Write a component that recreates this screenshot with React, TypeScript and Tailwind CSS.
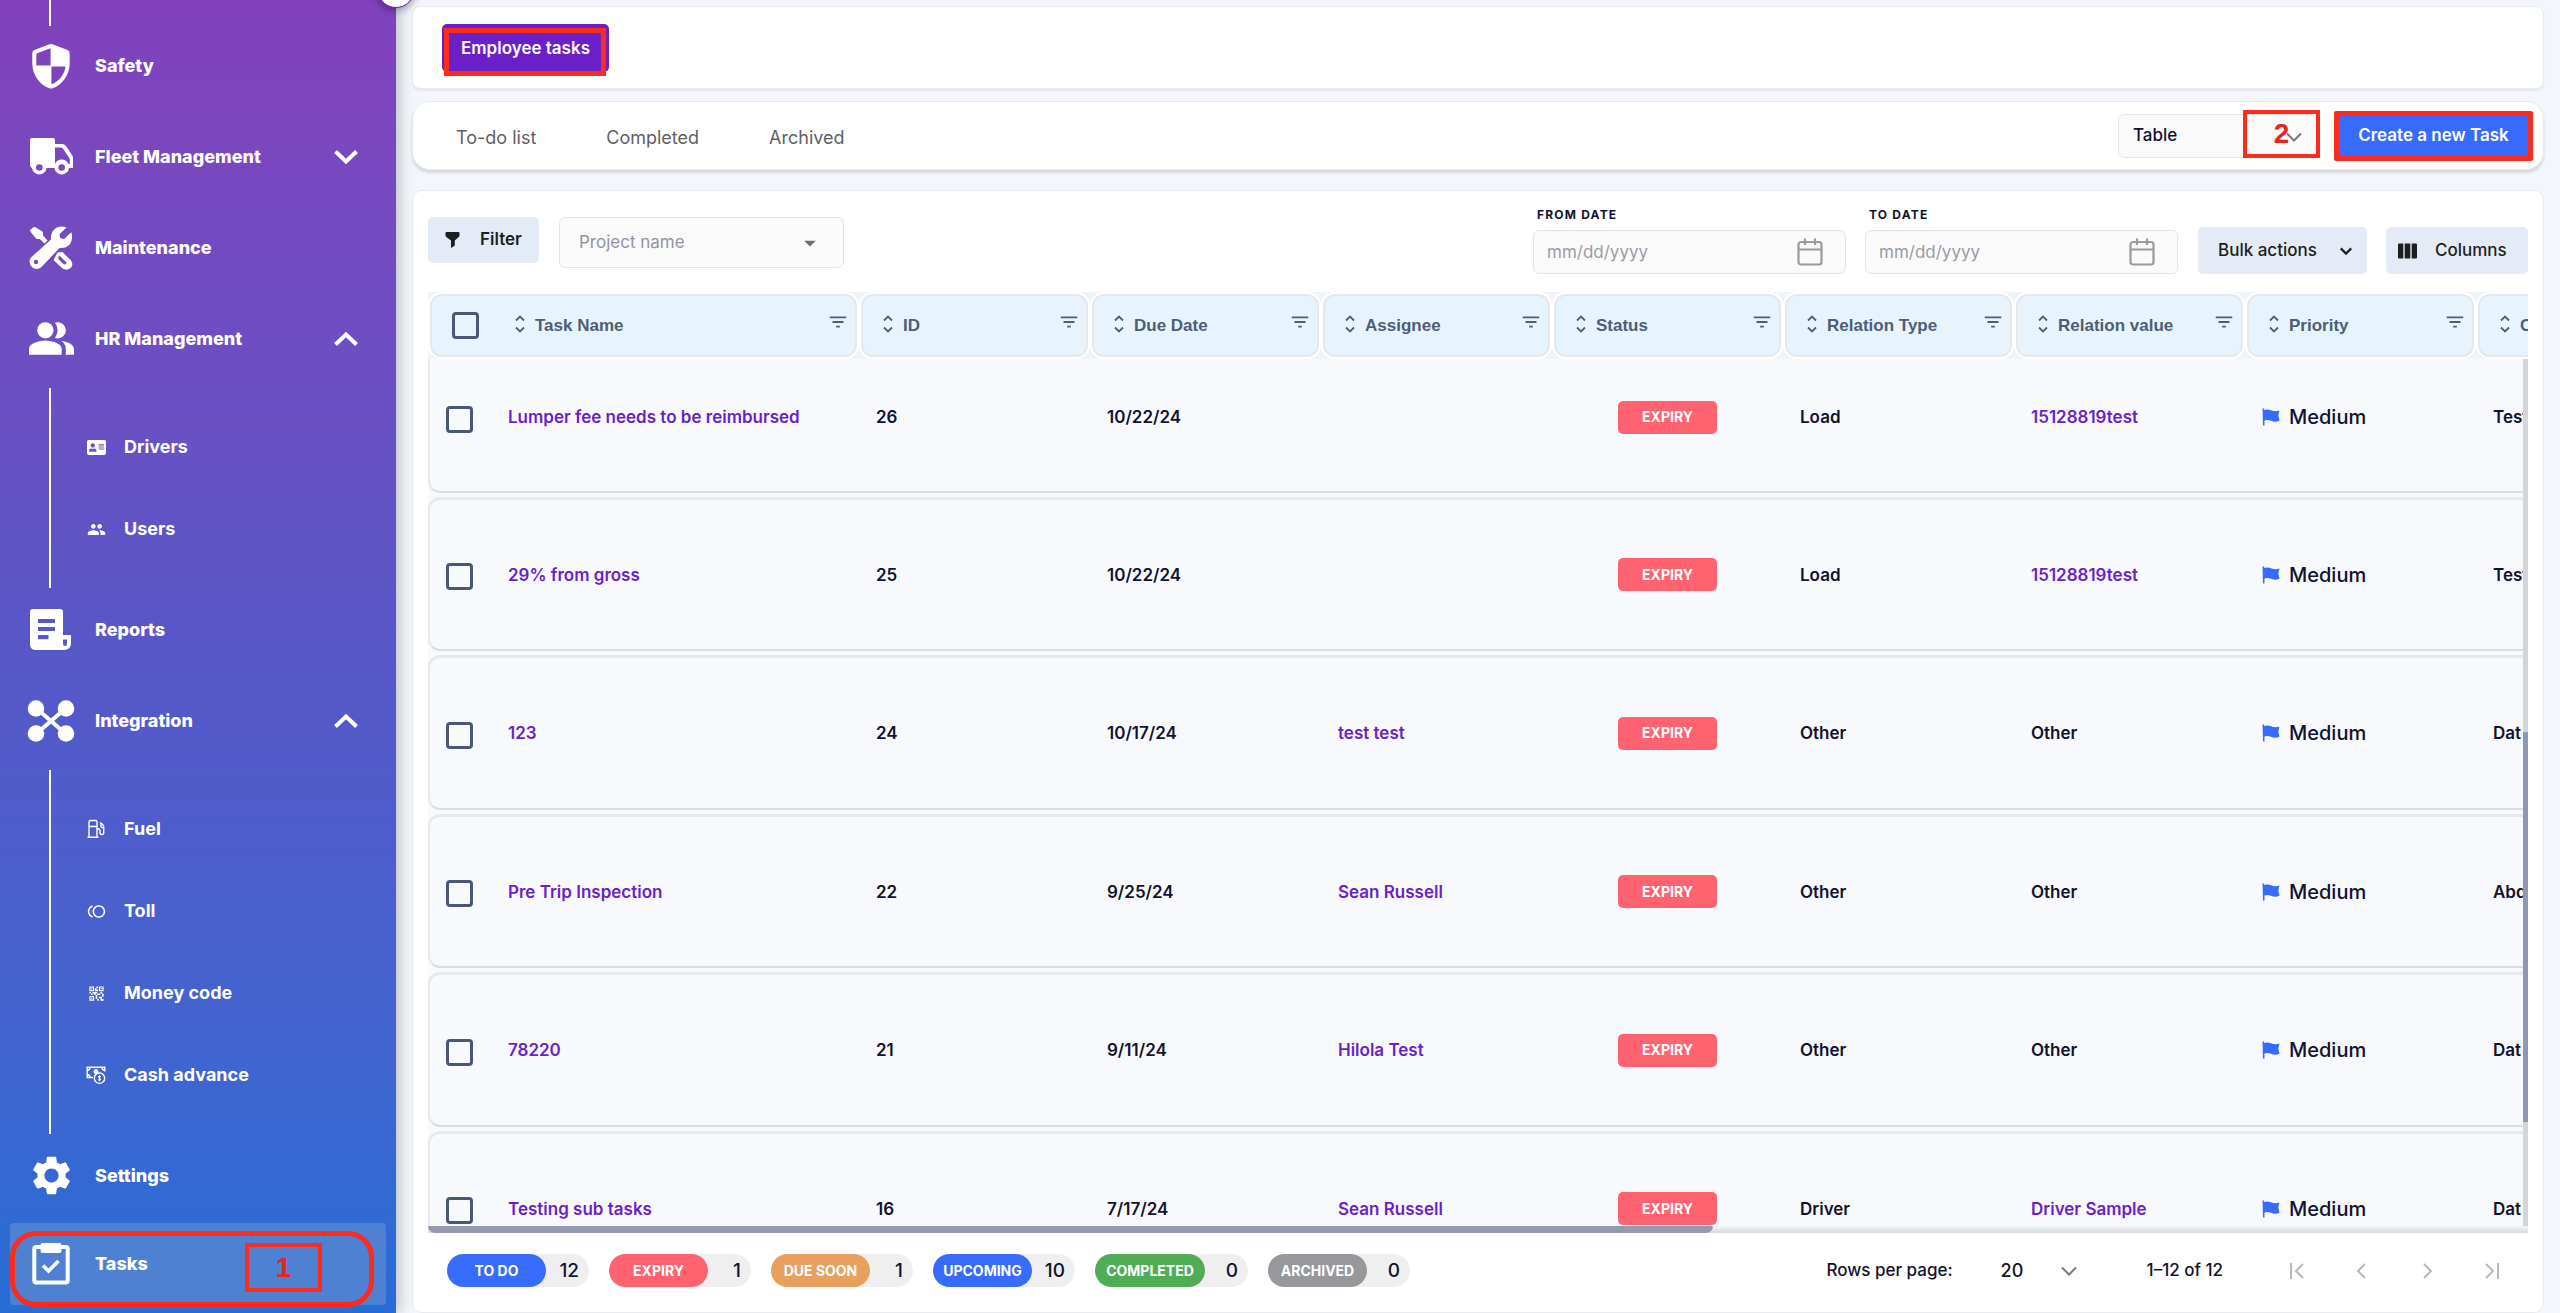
import React from "react";
import {
  MdFilterList,
  MdPeople,
  MdPeopleAlt,
  MdQrCode2,
  MdSettings,
  MdToll,
  MdArrowDropDown,
} from "react-icons/md";
import { FaAddressCard } from "react-icons/fa";

/* ---------- icons ---------- */

const ShieldIcon = () => (
  <svg viewBox="0 0 50 50" className="size-[50px]" aria-hidden="true">
    <path
      fill="currentColor"
      fillRule="evenodd"
      d="M23.500 3.300 8.500 9Q6.300 9.900 6.300 12.200V22C6.300 34.500 14 44 23.200 47.200Q25 47.800 26.800 47.200C36 44 43.700 34.500 43.700 22V12.200Q43.700 9.900 41.500 9L26.500 3.300Q25 2.600 23.500 3.300ZM24.600 7.300V24.600H10.300V14Q10.300 12.500 11.700 11.900ZM25.400 25.400H39.500C38.600 33.500 32.800 40.600 25.400 43.300Z"
    />
  </svg>
);

const TruckIcon = () => (
  <svg viewBox="0 0 50 50" className="size-[50px]" aria-hidden="true">
    <path
      fill="currentColor"
      fillRule="evenodd"
      d="M6 6H27Q29 6 29 8V12H36Q38.500 12 40 14L46 23Q47 24.500 47 26V36H43A7.300 7.300 0 0 1 28.500 36H20.500A7.300 7.300 0 0 1 6 36Q4 35 4 33V8Q4 6 6 6ZM29 15.500V32A7.300 7.300 0 0 1 42.500 32H43.800V27L37.500 17.300Q36.500 15.500 34.500 15.500ZM13.300 32.200A3.300 3.300 0 1 0 13.300 38.800A3.300 3.300 0 1 0 13.300 32.200ZM35.700 32.200A3.300 3.300 0 1 0 35.700 38.800A3.300 3.300 0 1 0 35.700 32.200Z"
    />
  </svg>
);

const ToolsIcon = () => (
  <svg viewBox="0 0 50 50" className="size-[50px]" aria-hidden="true">
    <path
      fill="currentColor"
      d="M4.500 6.500 7.500 4.200Q8.500 3.600 9.500 4.200L16 8.200Q17 9 17 10V12.500L21.500 17.500 18.500 20.500 13.800 16H11.500Q10.300 16 9.600 15L4.300 8.500Q3.600 7.300 4.500 6.500Z"
    />
    <path
      fill="currentColor"
      fillRule="evenodd"
      d="M40.500 4.500 33.500 11.300 34.300 15.200 38.200 16 45.200 9.200C48 16 44.500 26 33.500 25L15.500 44Q11 47.500 6.500 44.500Q1.500 40 5 34.500L25 16.500C24 7 32 1 40.500 4.500ZM10 36.800A2.200 2.200 0 1 0 10 41.200A2.200 2.200 0 1 0 10 36.800Z"
    />
    <path
      fill="currentColor"
      fillRule="evenodd"
      d="M31.500 29.500 36.500 29 45 37.500Q48 42 44.500 45Q41 48 36.500 45.500L27.500 37ZM33.500 32.800Q31.300 34.500 33 36.700L38 41.500Q40.300 42 40.600 39.500Z"
    />
  </svg>
);

const ReportIcon = () => (
  <svg viewBox="0 0 50 50" className="size-[50px]" aria-hidden="true">
    <path
      fill="currentColor"
      fillRule="evenodd"
      d="M7 4H34Q37 4 37 7V30H45V38Q45 45 38 45H10Q4 45 4 39V7Q4 4 7 4ZM12 14V18H29V14ZM12 22V26H29V22ZM12 30V34.300H22.500V30ZM37 34.500V38.500Q37 41 39 41Q41 41 41 38.500V34.500Z"
    />
  </svg>
);

const IntegrationIcon = () => (
  <svg viewBox="0 0 50 50" className="size-[50px]" aria-hidden="true">
    <path d="M10 12 40 38M40 12 10 38" stroke="currentColor" strokeWidth="4" />
    <g fill="currentColor">
      <circle cx="10" cy="12.500" r="8.300" />
      <circle cx="40" cy="12.500" r="8.300" />
      <circle cx="10" cy="37.500" r="8.300" />
      <circle cx="40" cy="37.500" r="8.300" />
    </g>
  </svg>
);

const TasksIcon = () => (
  <svg viewBox="0 0 50 50" className="size-[50px]" aria-hidden="true">
    <rect x="8.300" y="8" width="33.400" height="35.500" rx="2" fill="none" stroke="currentColor" strokeWidth="4" />
    <rect x="14.500" y="4" width="21" height="10" rx="2" fill="currentColor" />
    <path d="M17 26.500 22.500 32 32.500 22" fill="none" stroke="currentColor" strokeWidth="3.600" />
  </svg>
);

const FuelIcon = () => (
  <svg viewBox="0 0 20 20" className="size-5" fill="none" stroke="currentColor" strokeWidth="1.400" aria-hidden="true">
    <path d="M1.500 18.300H12.500M3 18V3Q3 1.500 4.500 1.500H9.500Q11 1.500 11 3V18M3 7.500H11" />
    <path d="M11 10H12.500Q14 10 14 11.500V14Q14 15.500 15.800 15.500Q17.700 15.500 17.700 14V8Q17.700 6.500 16.500 5.300L14 3.500M15 4.500V7.500Q15.200 8.800 17.500 8.800" />
  </svg>
);

const CashIcon = () => (
  <svg viewBox="0 0 20 20" className="size-5" fill="none" stroke="currentColor" strokeWidth="1.400" aria-hidden="true">
    <path d="M7 12.500H1.200V2.200H18.800V6.500" />
    <path d="M1.200 5.200A3 3 0 0 0 4 2.200M16 2.200A3 3 0 0 0 18.800 5.200M1.200 9.500A3 3 0 0 1 4 12.500" />
    <circle cx="10" cy="6.500" r="1.800" fill="currentColor" />
    <circle cx="13.500" cy="13.200" r="5.200" />
    <path d="M15 11.700Q13.500 10.600 12.400 11.600Q12 12.900 13.500 13.200Q15.200 13.600 14.600 14.800Q13.400 15.800 12 14.700M13.500 10.200V16.200" strokeWidth="1" />
  </svg>
);

const Chevron = ({ up = false }: { up?: boolean }) => (
  <svg viewBox="0 0 24 16" className="h-4 w-6" fill="none" stroke="currentColor" strokeWidth="4" aria-hidden="true">
    <path d={up ? "M1.500 13.500 12 3.500 22.500 13.500" : "M1.500 2.500 12 12.500 22.500 2.500"} />
  </svg>
);

const ThinChevron = ({ className }: { className: string }) => (
  <svg viewBox="0 0 16 10" className={className} fill="none" stroke="currentColor" strokeWidth="2" aria-hidden="true">
    <path d="M1 1.500 8 8.500 15 1.500" />
  </svg>
);

const SortIcon = () => (
  <svg viewBox="0 0 10 18" className="h-[18px] w-2.5 shrink-0" fill="none" stroke="currentColor" strokeWidth="1.800" aria-hidden="true">
    <path d="M1 5.500 5 1.500 9 5.500M1 12.500 5 16.500 9 12.500" />
  </svg>
);

const FunnelIcon = () => (
  <svg viewBox="0 0 15 18" className="h-[18px] w-[15px]" fill="currentColor" aria-hidden="true">
    <path d="M1.500 1H13.500Q14.500 1 14.500 2V4Q14.500 5 14 5.700L9.800 9.500V14.500L6 17V9.500L1 5.700Q.5 5 .5 4V2Q.5 1 1.500 1Z" />
  </svg>
);

const ColumnsIcon = () => (
  <svg viewBox="0 0 19 16" className="h-4 w-[19px]" fill="currentColor" aria-hidden="true">
    <path d="M1 .5H5.300V15.500H1Q0 15.500 0 14.500V1.500Q0 .5 1 .5ZM6.700 .5H12.300V15.500H6.700ZM13.700 .5H18Q19 .5 19 1.500V14.500Q19 15.500 18 15.500H13.700Z" />
  </svg>
);

const CalendarIcon = () => (
  <svg viewBox="0 0 26 28" className="h-7 w-[26px] text-[#9a9a9e]" fill="none" stroke="currentColor" strokeWidth="2.200" aria-hidden="true">
    <rect x="1.500" y="4" width="23" height="22.500" rx="2.500" />
    <path d="M1.500 11.500H24.500M8 .5V7M18 .5V7" />
  </svg>
);

const FlagIcon = () => (
  <svg viewBox="0 0 18 18" className="size-[18px] text-[#376bfb]" fill="currentColor" aria-hidden="true">
    <path d="M.5 .5H2.200V2Q5.500 .8 9 2.300Q13 4 17.500 2.600L16.300 7.500 17.500 12.800Q13 14.500 9 12.800Q5.500 11.300 2.500 12.600V17.500H1Z" />
  </svg>
);

const PageArrow = ({ d, label }: { d: string; label: string }) => (
  <button type="button" aria-label={label} className="text-[#b9b9bd]">
    <svg viewBox="0 0 16 18" className="h-[18px] w-4" fill="none" stroke="currentColor" strokeWidth="2" aria-hidden="true">
      <path d={d} />
    </svg>
  </button>
);

/* ---------- sidebar ---------- */

type NavProps = { icon: React.ReactNode; label: string; arrow?: "up" | "down" };

const NavItem = ({ icon, label, arrow }: NavProps) => (
  <a href="#" className="flex h-[91px] items-center pr-[38px] pl-[26px]">
    <span className="flex w-[50px] justify-center">{icon}</span>
    <span className="ml-[19px] flex-1 text-[18px] leading-6 font-extrabold">{label}</span>
    {arrow && <Chevron up={arrow === "up"} />}
  </a>
);

const SubNav = ({ items }: { items: { icon: React.ReactNode; label: string }[] }) => (
  <ul className="mt-1 -mb-1 ml-[49px] border-l-2 border-white py-[18px]">
    {items.map((i) => (
      <li key={i.label}>
        <a href="#" className="flex h-[82px] items-center pl-[35px]">
          <span className="flex w-5 justify-center">{i.icon}</span>
          <span className="ml-[18px] text-[18px] leading-6 font-bold">{i.label}</span>
        </a>
      </li>
    ))}
  </ul>
);

const Sidebar = () => (
  <aside className="relative z-10 w-[396px] shrink-0 bg-gradient-to-b from-[#8241bc] via-[#5757c8] to-[#256dd5] text-white shadow-[2px_0_14px_rgba(60,70,80,0.35)]">
    <nav className="flex h-full flex-col overflow-hidden">
      <div className="ml-[49px] h-[26px] w-0.5 shrink-0 bg-white" />
      <div className="-mt-1.5">
        <NavItem icon={<ShieldIcon />} label="Safety" />
        <NavItem icon={<TruckIcon />} label="Fleet Management" arrow="down" />
        <NavItem icon={<ToolsIcon />} label="Maintenance" />
        <NavItem icon={<MdPeopleAlt size={49} />} label="HR Management" arrow="up" />
        <SubNav
          items={[
            { icon: <FaAddressCard size={19} />, label: "Drivers" },
            { icon: <MdPeople size={19} />, label: "Users" },
          ]}
        />
        <NavItem icon={<ReportIcon />} label="Reports" />
        <NavItem icon={<IntegrationIcon />} label="Integration" arrow="up" />
        <SubNav
          items={[
            { icon: <FuelIcon />, label: "Fuel" },
            { icon: <MdToll size={19} />, label: "Toll" },
            { icon: <MdQrCode2 size={19} />, label: "Money code" },
            { icon: <CashIcon />, label: "Cash advance" },
          ]}
        />
        <NavItem icon={<MdSettings size={47} />} label="Settings" />
        <a href="#" aria-current="page" className="relative mx-2.5 mt-0.5 flex h-[82px] items-center rounded bg-[#4f81d3] pl-4">
          <TasksIcon />
          <span className="ml-[19px] text-[18px] leading-6 font-extrabold">Tasks</span>
          <span className="absolute top-2 right-3 -bottom-0.5 left-0 rounded-[26px] border-5 border-[#fb2b1d]" />
          <span className="absolute top-5 left-[235px] flex h-[49px] w-[77px] items-center justify-center border-4 border-[#fb2b1d] font-['Liberation_Sans'] text-[28px] leading-none font-bold text-[#e2281c]">
            1
          </span>
        </a>
      </div>
    </nav>
    <button
      type="button"
      aria-label="Collapse menu"
      className="absolute -top-[30px] -right-[19px] size-[38px] rounded-full border border-[#6b1fc7] bg-white shadow-[0_2px_8px_rgba(0,0,0,0.4)]"
    />
  </aside>
);

/* ---------- table ---------- */

const columns = ["ID", "Due Date", "Assignee", "Status", "Relation Type", "Relation value", "Priority", "C"];

const rows = [
  { name: "Lumper fee needs to be reimbursed", id: 26, due: "10/22/24", who: "", type: "Load", value: "15128819test", link: true, last: "Test" },
  { name: "29% from gross", id: 25, due: "10/22/24", who: "", type: "Load", value: "15128819test", link: true, last: "Test" },
  { name: "123", id: 24, due: "10/17/24", who: "test test", type: "Other", value: "Other", link: false, last: "Dat" },
  { name: "Pre Trip Inspection", id: 22, due: "9/25/24", who: "Sean Russell", type: "Other", value: "Other", link: false, last: "Abd" },
  { name: "78220", id: 21, due: "9/11/24", who: "Hilola Test", type: "Other", value: "Other", link: false, last: "Dat" },
  { name: "Testing sub tasks", id: 16, due: "7/17/24", who: "Sean Russell", type: "Driver", value: "Driver Sample", link: true, last: "Dat" },
];

const Check = ({ label }: { label: string }) => (
  <input
    type="checkbox"
    aria-label={label}
    className="size-[27px] shrink-0 appearance-none rounded-[4px] border-3 border-[#4a5878] bg-transparent checked:bg-[#4a5878]"
  />
);

const HeadCell = ({ title, first = false }: { title: string; first?: boolean }) => (
  <th scope="col" className="bg-[#f0f3f9] p-0 font-['Liberation_Sans'] text-[17px] leading-5 font-bold text-[#4e5d78]">
    <div className="rounded-[14px] border-2 border-white">
      <div className="flex h-[63px] items-center rounded-xl border-2 border-[#e7e8ea] bg-[#e7f4fe] pr-1.5 pl-5">
        {first && (
          <span className="mr-9 flex">
            <Check label="Select all tasks" />
          </span>
        )}
        <span className="-mt-1 flex">
          <SortIcon />
        </span>
        <span className="ml-2.5 flex-1 text-left whitespace-nowrap">{title}</span>
        <MdFilterList size={22} className="-mt-2 shrink-0" />
      </div>
    </div>
  </th>
);

const rowHeights = ["h-[138px]", "h-[158px]", "h-[159px]", "h-[158px]", "h-[159px]", "h-[158px]"];

const TaskTable = () => (
  <div className="relative min-h-0 flex-1 overflow-hidden bg-[#f8f9fc]">
    <table className="w-[2279px] table-fixed border-separate border-spacing-0">
      <colgroup>
        <col className="w-[431px]" />
        {columns.map((c) => (
          <col key={c} className="w-[231px]" />
        ))}
      </colgroup>
      <thead>
        <tr>
          <HeadCell title="Task Name" first />
          {columns.map((c) => (
            <HeadCell key={c} title={c} />
          ))}
        </tr>
      </thead>
      <tbody className="text-[17px] leading-6 font-semibold text-[#11122e]">
        {rows.map((r, n) => {
          const box =
            n === 0
              ? "flex h-full items-center border-b-2 border-[#dcdde0] pb-4 "
              : "flex h-full items-center border-t-3 border-b-2 border-t-[#e7e8ea] border-b-[#dcdde0] ";
          const cell = rowHeights[n] + " bg-[#f8f9fc] p-0 pb-1";
          return (
            <tr key={r.id}>
              <td className={cell}>
                <div className={box + "border-l-2 border-l-[#e7e8ea] pl-4 " + (n === 0 ? "rounded-bl-xl" : "rounded-l-xl")}>
                  <span className="flex pt-1">
                    <Check label={"Select " + r.name} />
                  </span>
                  <a href="#" className="ml-[35px] whitespace-nowrap text-[#6b1fc7]">
                    {r.name}
                  </a>
                </div>
              </td>
              <td className={cell}>
                <div className={box + "pl-[17px]"}>{r.id}</div>
              </td>
              <td className={cell}>
                <div className={box + "pl-[17px]"}>{r.due}</div>
              </td>
              <td className={cell}>
                <div className={box + "pl-[17px]"}>
                  {r.who && (
                    <a href="#" className="text-[#6b1fc7]">
                      {r.who}
                    </a>
                  )}
                </div>
              </td>
              <td className={cell}>
                <div className={box + "justify-center"}>
                  <span className="flex h-[33px] w-[99px] items-center justify-center rounded-[5px] bg-[#ff6370] text-[14px] font-bold text-white">
                    EXPIRY
                  </span>
                </div>
              </td>
              <td className={cell}>
                <div className={box + "pl-[17px]"}>{r.type}</div>
              </td>
              <td className={cell}>
                <div className={box + "pl-[17px]"}>
                  {r.link ? (
                    <a href="#" className="text-[#6b1fc7]">
                      {r.value}
                    </a>
                  ) : (
                    r.value
                  )}
                </div>
              </td>
              <td className={cell}>
                <div className={box + "gap-[9px] pl-[17px]"}>
                  <FlagIcon />
                  <span className="text-[20px] font-medium">Medium</span>
                </div>
              </td>
              <td className={cell}>
                <div className={box + "pl-[17px] whitespace-nowrap"}>{r.last}</div>
              </td>
            </tr>
          );
        })}
      </tbody>
    </table>
    <div className="absolute top-[67px] right-0 bottom-[7px] flex w-[5px] flex-col bg-[#d4d5d9]">
      <div className="flex-[43]" />
      <div className="flex-[45] bg-[#9097b0]" />
      <div className="flex-[12]" />
    </div>
    <div className="absolute right-0 bottom-0 left-0 h-[7px] bg-gradient-to-b from-[#f4f5f8] to-[#d8d9dc]">
      <div className="h-full w-[61.200%] rounded-b-lg bg-[#959ab0]" />
    </div>
  </div>
);

/* ---------- toolbar and footer ---------- */

const DateField = ({ id, label }: { id: string; label: string }) => (
  <div className="w-[313px]">
    <label htmlFor={id} className="block pl-1 text-[12px] leading-4 font-bold tracking-widest text-[#11122e]">
      {label}
    </label>
    <div className="mt-[7px] flex h-11 items-center rounded-md border border-[#e4e4e6] bg-[#fafafa] pr-[22px] pl-[13px]">
      <input
        id={id}
        type="text"
        placeholder="mm/dd/yyyy"
        className="min-w-0 flex-1 bg-transparent text-[17px] leading-6 outline-none placeholder:text-[#9a9aa8]"
      />
      <CalendarIcon />
    </div>
  </div>
);

const counters = [
  { label: "TO DO", count: 12, color: "bg-[#376bfb] w-[99px]" },
  { label: "EXPIRY", count: 1, color: "bg-[#ff6370] w-[99px]" },
  { label: "DUE SOON", count: 1, color: "bg-[#e99f5d] w-[99px]" },
  { label: "UPCOMING", count: 10, color: "bg-[#376bfb] w-[99px]" },
  { label: "COMPLETED", count: 0, color: "bg-[#4fae54] w-[110px]" },
  { label: "ARCHIVED", count: 0, color: "bg-[#97989c] w-[99px]" },
];

export default function App() {
  return (
    <div className="flex h-screen overflow-hidden bg-[#f3f6fa] font-['Inter',sans-serif] text-[#11122e]">
      <Sidebar />
      <main className="flex min-w-0 flex-1 flex-col pt-1.5 pr-4 pl-4">
        <section className="h-[83px] shrink-0 rounded-lg border border-[#e8eaed] bg-white pt-[17px] pl-[29px] shadow-[0_2px_2px_rgba(0,0,0,0.06)]">
          <button type="button" className="relative flex h-12 items-center rounded-[5px] bg-[#6b1fc7] px-[19px] pt-0.5 text-[17px] font-semibold text-white">
            Employee tasks
            <span className="absolute top-1 right-[3px] -bottom-1 left-0.5 border-5 border-[#fb2b1d]" />
          </button>
        </section>

        <section className="mt-3 flex h-[69px] shrink-0 items-center rounded-[18px] border border-[#e8eaed] bg-white pr-2.5 pl-[43px] shadow-[0_3px_3px_rgba(0,0,0,0.12)]">
          <div className="flex flex-1 gap-[70px] pt-1 text-[18px] leading-6 text-[#5e6066]">
            <a href="#">To-do list</a>
            <a href="#">Completed</a>
            <a href="#">Archived</a>
          </div>
          <div className="relative mr-4">
            <select
              aria-label="View"
              className="h-11 w-[200px] appearance-none rounded-md border border-[#e4e4e6] bg-[#fafafa] pl-3.5 text-[17px] font-medium"
            >
              <option>Table</option>
            </select>
            <ThinChevron className="absolute top-[18px] right-4 h-2.5 w-4 text-[#77777c]" />
            <span className="absolute -top-1 -right-0.5 flex h-12 w-[77px] items-center justify-center border-4 border-[#fb2b1d] font-['Liberation_Sans'] text-[28px] leading-none font-bold text-[#e2281c]">
              2
            </span>
          </div>
          <button type="button" className="relative h-[50px] w-[199px] rounded-xs border-5 border-[#fb2b1d] bg-[#376bfb] text-[17px] font-semibold whitespace-nowrap text-white">
            Create a new Task
          </button>
        </section>

        <section className="mt-5 flex min-h-0 flex-1 flex-col rounded-[10px] border border-[#e8eaed] bg-white px-[15px]">
          <div className="flex h-[101px] shrink-0 items-start pt-4">
            <button type="button" className="mt-2.5 flex h-[46px] w-[111px] items-center rounded-[5px] bg-[#e5ebf6] pl-[17px] text-[17px] font-semibold text-[#1d1e20]">
              <FunnelIcon />
              <span className="ml-5">Filter</span>
            </button>
            <div className="relative mt-2.5 ml-5">
              <select
                aria-label="Project name"
                className="h-[51px] w-[285px] appearance-none rounded-md border border-[#e4e4e6] bg-[#fafafa] pl-[19px] text-[17px] text-[#9494a2]"
              >
                <option>Project name</option>
              </select>
              <MdArrowDropDown size={28} className="pointer-events-none absolute top-3 right-5 text-[#6f6f74]" />
            </div>
            <div className="flex-1" />
            <DateField id="from" label="FROM DATE" />
            <div className="w-[19px]" />
            <DateField id="to" label="TO DATE" />
            <button type="button" className="mt-5 ml-5 flex h-[47px] w-[169px] items-center justify-between rounded-[5px] bg-[#e5ebf6] pr-[15px] pl-5 text-[17px] font-medium text-[#1d1e20]">
              Bulk actions
              <ThinChevron className="h-2 w-3 stroke-3" />
            </button>
            <button type="button" className="mt-5 ml-[19px] flex h-[47px] w-[142px] items-center rounded-[5px] bg-[#e5ebf6] pl-3 text-[17px] font-medium text-[#1d1e20]">
              <ColumnsIcon />
              <span className="ml-[18px]">Columns</span>
            </button>
          </div>

          <TaskTable />

          <footer className="flex h-[79px] shrink-0 items-center pr-7 pb-1 pl-[19px]">
            <ul className="flex flex-1 gap-5">
              {counters.map((c) => (
                <li key={c.label} className="flex h-[33px] items-center rounded-full bg-[#efefef]">
                  <span className={"flex h-full items-center justify-center rounded-full text-[14px] font-bold text-white " + c.color}>{c.label}</span>
                  <span className="w-[43px] pr-2.5 text-right text-[19px] leading-6 font-medium">{c.count}</span>
                </li>
              ))}
            </ul>
            <label htmlFor="per-page" className="text-[17px] font-medium">
              Rows per page:
            </label>
            <div className="relative ml-9">
              <select id="per-page" className="h-10 w-[98px] appearance-none bg-transparent pl-3 text-[18px] font-medium">
                <option>20</option>
              </select>
              <ThinChevron className="pointer-events-none absolute top-[15px] right-2.5 h-2.5 w-4 text-[#77777c]" />
            </div>
            <span className="ml-[60px] text-[17px] font-medium">1–12 of 12</span>
            <div className="ml-[66px] flex gap-[49px]">
              <PageArrow label="First page" d="M2 1V17M14 2 7 9 14 16" />
              <PageArrow label="Previous page" d="M11 2 4 9 11 16" />
              <PageArrow label="Next page" d="M5 2 12 9 5 16" />
              <PageArrow label="Last page" d="M2 2 9 9 2 16M14 1V17" />
            </div>
          </footer>
        </section>
      </main>
    </div>
  );
}
